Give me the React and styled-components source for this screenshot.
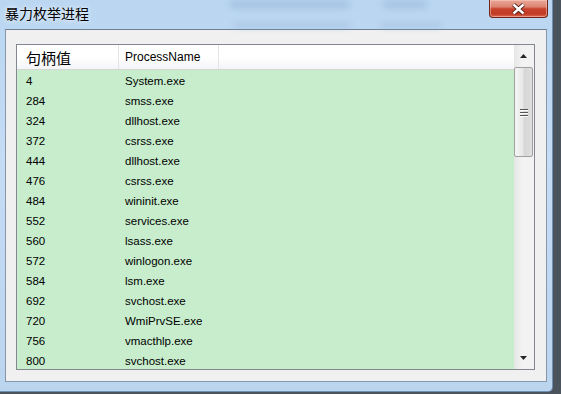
import styled, { createGlobalStyle } from "styled-components";

const GlobalStyle = createGlobalStyle`
  html, body {
    margin: 0;
    padding: 0;
    background: #4b535d;
  }
  body {
    font-family: "Liberation Sans", "Noto Sans CJK SC", sans-serif;
  }
`;

const Window = styled.div`
  width: 553px;
  height: 392px;
  display: flex;
  flex-direction: column;
  box-sizing: border-box;
  padding: 0 5px 9px;
  background: linear-gradient(180deg, #bad6f1 0%, #c4dcf4 40%, #bcd5ef 100%);
  border-right: 1px solid #6f8fb4;
  border-bottom: 1px solid #6f8fb4;
  border-bottom-right-radius: 5px;
`;

const TitleBar = styled.div`
  position: relative;
  height: 29px;
  display: flex;
  align-items: flex-start;
  justify-content: space-between;
  flex-shrink: 0;
`;

const Title = styled.div`
  font-family: "Noto Sans CJK SC", sans-serif;
  font-size: 14px;
  line-height: 18px;
  color: #000;
  margin-top: 4px;
  text-shadow: 0 0 6px #e6f1fc, 0 0 3px #e6f1fc;
  position: relative;
  z-index: 1;
`;

const Ghost = styled.div`
  position: absolute;
  background: #8eadd3;
  filter: blur(3px);
  opacity: 0.4;
  border-radius: 2px;
`;

const CloseButton = styled.div`
  width: 59px;
  height: 18px;
  margin-right: -1px;
  box-sizing: border-box;
  border: 1px solid #6e2518;
  border-top: none;
  border-radius: 0 0 4px 4px;
  background: linear-gradient(
    180deg,
    #e8a898 0%,
    #dd8472 40%,
    #c9432c 52%,
    #c23a24 80%,
    #d8664d 100%
  );
  box-shadow: inset 0 0 0 1px rgba(255, 210, 200, 0.5);
  display: flex;
  align-items: center;
  justify-content: center;
  position: relative;
  z-index: 1;
`;

const Client = styled.div`
  flex: 1;
  background: #f0f0f0;
  border: 1px solid #8796a8;
  border-top-color: #6f7f93;
  padding: 14px 0 0 10px;
`;

const ListView = styled.div`
  width: 519px;
  height: 326px;
  box-sizing: border-box;
  border: 1px solid #828790;
  display: flex;
  background: #c7edcc;
`;

const ListBody = styled.div`
  flex: 1;
  display: flex;
  flex-direction: column;
  overflow: hidden;
`;

const Header = styled.div`
  height: 24px;
  flex-shrink: 0;
  display: flex;
  background: linear-gradient(180deg, #ffffff 0%, #ffffff 50%, #f4f5f7 100%);
  border-bottom: 1px solid #d5d5d5;
`;

const HeaderCell = styled.div`
  width: ${(p) => (p.$width ? `${p.$width}px` : "auto")};
  flex: ${(p) => (p.$width ? "none" : "1")};
  box-sizing: border-box;
  padding-left: ${(p) => p.$pad}px;
  border-right: ${(p) => (p.$width ? "1px solid #e3e4e6" : "none")};
  display: flex;
  align-items: center;
  font-family: ${(p) =>
    p.$cjk ? `"Noto Sans CJK SC", sans-serif` : `"Liberation Sans", sans-serif`};
  font-size: ${(p) => (p.$cjk ? 15 : 12)}px;
  color: #000;
`;

const Row = styled.div`
  height: 20px;
  box-sizing: border-box;
  flex-shrink: 0;
  display: flex;
  align-items: center;
  padding-top: 1px;
  font-family: "Liberation Sans", sans-serif;
  font-size: 11.5px;
  color: #000;
`;

const Cell = styled.div`
  width: ${(p) => p.$width}px;
  box-sizing: border-box;
  padding-left: ${(p) => p.$pad}px;
  white-space: nowrap;
`;

const ScrollBar = styled.div`
  width: 20px;
  display: flex;
  flex-direction: column;
  background: linear-gradient(90deg, #e6e6e6 0%, #f2f2f2 40%, #f2f2f2 100%);
`;

const ArrowButton = styled.div`
  height: 22px;
  flex-shrink: 0;
  display: flex;
  align-items: center;
  justify-content: center;
  padding-right: 1px;
`;

const Track = styled.div`
  flex: 1;
  display: flex;
  flex-direction: column;
`;

const Thumb = styled.div`
  height: 90px;
  margin: 0 1px 0 0;
  box-sizing: border-box;
  border: 1px solid #a0a0a0;
  border-radius: 2px;
  background: linear-gradient(90deg, #f5f5f5 0%, #e8e8e8 45%, #d6d6d6 55%, #dedede 100%);
  display: flex;
  flex-direction: column;
  align-items: center;
  justify-content: center;
  gap: 2px;
`;

const Grip = styled.div`
  width: 8px;
  height: 1px;
  background: #555;
  box-shadow: 0 1px 0 #fafafa;
`;

const processes = [
  [4, "System.exe"],
  [284, "smss.exe"],
  [324, "dllhost.exe"],
  [372, "csrss.exe"],
  [444, "dllhost.exe"],
  [476, "csrss.exe"],
  [484, "wininit.exe"],
  [552, "services.exe"],
  [560, "lsass.exe"],
  [572, "winlogon.exe"],
  [584, "lsm.exe"],
  [692, "svchost.exe"],
  [720, "WmiPrvSE.exe"],
  [756, "vmacthlp.exe"],
  [800, "svchost.exe"],
];

function CloseGlyph() {
  return (
    <svg width="15" height="12" viewBox="0 0 15 12">
      <path
        d="M2.5 1.5 L12.5 10.5 M12.5 1.5 L2.5 10.5"
        stroke="#4a1a12"
        strokeWidth="4.2"
        fill="none"
      />
      <path
        d="M2.5 1.5 L12.5 10.5 M12.5 1.5 L2.5 10.5"
        stroke="#ffffff"
        strokeWidth="2.4"
        fill="none"
      />
    </svg>
  );
}

function Arrow({ up }) {
  return (
    <svg width="7" height="4" viewBox="0 0 7 4">
      <path d={up ? "M0 4 L3.5 0 L7 4 Z" : "M0 0 L3.5 4 L7 0 Z"} fill="#262626" />
    </svg>
  );
}

export default function App() {
  return (
    <>
      <GlobalStyle />
      <Window>
        <TitleBar>
          <Ghost style={{ left: 225, top: 0, width: 120, height: 9 }} />
          <Ghost style={{ left: 378, top: 0, width: 44, height: 9 }} />
          <Ghost style={{ left: 228, top: 23, width: 118, height: 5 }} />
          <Ghost style={{ left: 375, top: 23, width: 62, height: 5 }} />
          <Title>暴力枚举进程</Title>
          <CloseButton>
            <CloseGlyph />
          </CloseButton>
        </TitleBar>
        <Client>
          <ListView>
            <ListBody>
              <Header>
                <HeaderCell $width={102} $pad={9} $cjk>
                  句柄值
                </HeaderCell>
                <HeaderCell $width={100} $pad={6}>
                  ProcessName
                </HeaderCell>
                <HeaderCell />
              </Header>
              {processes.map(([pid, name]) => (
                <Row key={pid}>
                  <Cell $width={102} $pad={9}>
                    {pid}
                  </Cell>
                  <Cell $width={100} $pad={6}>
                    {name}
                  </Cell>
                </Row>
              ))}
            </ListBody>
            <ScrollBar>
              <ArrowButton>
                <Arrow up />
              </ArrowButton>
              <Track>
                <Thumb>
                  <Grip />
                  <Grip />
                  <Grip />
                </Thumb>
              </Track>
              <ArrowButton>
                <Arrow />
              </ArrowButton>
            </ScrollBar>
          </ListView>
        </Client>
      </Window>
    </>
  );
}
